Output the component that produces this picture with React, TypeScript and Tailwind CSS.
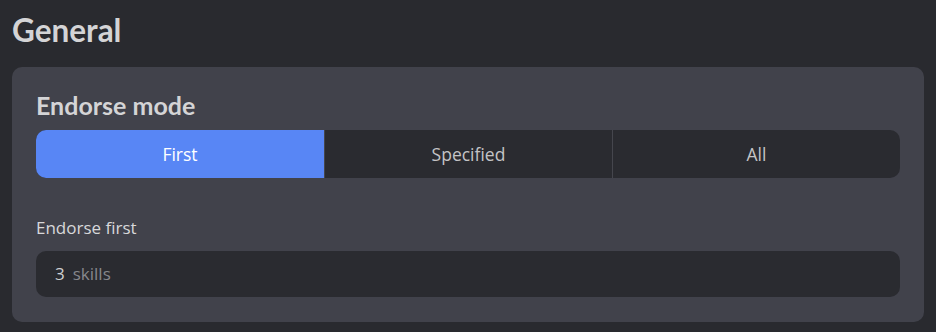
import { useState } from "react"

const modes = ["First", "Specified", "All"]

export default function App() {
  const [mode, setMode] = useState("First")

  return (
    <div className="h-[332px] w-[936px] overflow-hidden bg-[#292a2f] px-3 pt-[10px] font-['Open_Sans',sans-serif]">
      <h1 className="h-[44px] font-['Lato',sans-serif] text-[31.5px] leading-[40px] font-bold text-[#d4d4d6]">General</h1>
      <div className="mt-[13px] rounded-[10px] bg-[#41424b] px-6 pt-[23px] pb-[25px]">
        <h2 className="font-['Lato',sans-serif] text-[25px] leading-[30px] font-bold text-[#d4d4d6]">Endorse mode</h2>
        <div className="mt-[10px] grid h-12 grid-cols-3 overflow-hidden rounded-[10px] bg-[#2a2b30]">
          {modes.map((m, i) => (
            <button
              key={m}
              onClick={() => setMode(m)}
              className={`text-[17.5px] ${
                mode === m ? "bg-[#5886f5] text-white" : "text-[#c4c4c6]"
              } ${i > 0 ? "border-l border-[#45464d]" : ""}`}
            >
              {m}
            </button>
          ))}
        </div>
        <p className="mt-[40px] text-[17px] leading-5 text-[#d8d8da]">Endorse first</p>
        <div className="mt-[13px] flex h-[46px] items-center rounded-[10px] bg-[#2a2b30] px-[19px] text-[17px]">
          <span className="text-[#d0d0d2]">3</span>
          <span className="ml-[8px] text-[#86878c]">skills</span>
        </div>
      </div>
    </div>
  )
}
